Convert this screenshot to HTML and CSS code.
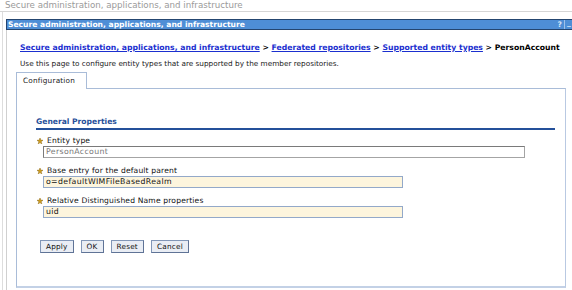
FILE: index.html
```html
<!DOCTYPE html>
<html>
<head>
<meta charset="utf-8">
<link rel="stylesheet" href="styles.css">
</head>
<body>
<div class="page-title">Secure administration, applications, and infrastructure</div>
<div class="outer">
  <div class="titlebar">
    <span class="tb-text">Secure administration, applications, and infrastructure</span>
    <span class="tb-icons"><span class="tb-help">?</span><span class="tb-min">_</span></span>
  </div>
  <div class="body">
    <div class="crumbs"><a href="#">Secure administration, applications, and infrastructure</a> &gt; <a href="#">Federated repositories</a> &gt; <a href="#">Supported entity types</a> &gt; <span class="current">PersonAccount</span></div>
    <div class="desc">Use this page to configure entity types that are supported by the member repositories.</div>
    <div class="tabs"><div class="tab">Configuration</div></div>
    <div class="panel">
      <div class="section">General Properties</div>
      <div class="field">
        <div class="label"><svg class="star" viewBox="0 0 6 6" width="6" height="6"><path d="M3 0 L3.7 2.1 L6 2.3 L4.1 3.6 L4.8 6 L3 4.6 L1.2 6 L1.9 3.6 L0 2.3 L2.3 2.1 Z" fill="#d4a21c" stroke="#8a6410" stroke-width="0.5"/></svg>Entity type</div>
        <div class="input ro wide">PersonAccount</div>
      </div>
      <div class="field">
        <div class="label"><svg class="star" viewBox="0 0 6 6" width="6" height="6"><path d="M3 0 L3.7 2.1 L6 2.3 L4.1 3.6 L4.8 6 L3 4.6 L1.2 6 L1.9 3.6 L0 2.3 L2.3 2.1 Z" fill="#d4a21c" stroke="#8a6410" stroke-width="0.5"/></svg>Base entry for the default parent</div>
        <div class="input edit">o=defaultWIMFileBasedRealm</div>
      </div>
      <div class="field">
        <div class="label"><svg class="star" viewBox="0 0 6 6" width="6" height="6"><path d="M3 0 L3.7 2.1 L6 2.3 L4.1 3.6 L4.8 6 L3 4.6 L1.2 6 L1.9 3.6 L0 2.3 L2.3 2.1 Z" fill="#d4a21c" stroke="#8a6410" stroke-width="0.5"/></svg>Relative Distinguished Name properties</div>
        <div class="input edit">uid</div>
      </div>
      <div class="buttons">
        <span class="btn">Apply</span><span class="btn">OK</span><span class="btn">Reset</span><span class="btn">Cancel</span>
      </div>
    </div>
  </div>
</div>
</body>
</html>
```
FILE: styles.css
```css
html, body {
  margin: 0;
  padding: 0;
  background: #ffffff;
  font-family: "DejaVu Sans", Verdana, sans-serif;
  color: #000;
  overflow: hidden;
}
.page-title {
  height: 11px;
  line-height: 10px;
  padding-left: 5px;
  font-size: 8.7px;
  color: #9a9a9a;
  border-bottom: 1px solid #d6d6d6;
  white-space: nowrap;
}
.outer {
  margin-left: 2px;
  border-left: 1px solid #dddddd;
  padding: 7px 0 0 3px;
  height: 280px;
}
.titlebar {
  display: flex;
  justify-content: space-between;
  align-items: center;
  height: 9px;
  border: 1px solid #24456f;
  border-right: none;
  background: #4e8ed6;
  color: #fff;
  font-weight: bold;
  font-size: 7.6px;
  line-height: 9px;
  white-space: nowrap;
}
.tb-text { padding-left: 1px; }
.tb-icons { display: flex; height: 9px; }
.tb-help { padding-right: 2px; color: #dbe8f7; }
.tb-min {
  border-left: 1px solid #9fc1ea;
  padding-left: 2px;
  width: 5px;
  line-height: 6px;
  color: #dbe8f7;
}
.body {
  border-left: 1px solid #d0d0d0;
  padding: 12px 6px 0 13px;
  height: 260px;
  font-size: 7.3px;
}
.crumbs {
  line-height: 11px;
  white-space: nowrap;
  font-weight: bold;
  font-size: 7.7px;
}
.crumbs a { color: #1b2fcf; text-decoration: underline; }
.current { color: #000; }
.desc {
  margin-top: 5px;
  line-height: 11px;
  white-space: nowrap;
  color: #222;
}
.tabs {
  margin: 3px 0 -1px -4px;
  display: flex;
}
.tab {
  position: relative;
  background: #fff;
  border: 1px solid #a9bcd8;
  border-bottom: none;
  height: 16px;
  line-height: 16px;
  padding: 0 6px;
  width: 57px;
  color: #222;
  letter-spacing: 0.2px;
}
.panel {
  margin-left: -4px;
  border: 1px solid #a9bcd8;
  border-right-color: #b9c9e2;
  border-bottom: 2px solid #c3d1e6;
  height: 197px;
  padding: 0 10px 0 19px;
}
.section {
  margin-top: 28px;
  line-height: 10px;
  font-weight: bold;
  font-size: 7.6px;
  color: #27509a;
  border-bottom: 2px solid #24509a;
  padding-bottom: 1px;
}
.field { margin-top: 5px; }
.field + .field { margin-top: 7px; }
.label {
  display: flex;
  align-items: center;
  line-height: 11px;
  color: #111;
  white-space: nowrap;
  font-size: 7.6px;
  letter-spacing: 0.15px;
}
.star { margin: 0 4px 0 1px; }
.input {
  margin-left: 7px;
  height: 10px;
  line-height: 10px;
  padding-left: 2px;
  white-space: nowrap;
  font-size: 7.8px;
  letter-spacing: 0.35px;
}
.ro {
  width: 478px;
  border: 1px solid #a4a4a4;
  border-top-color: #7a7a7a;
  border-left-color: #7a7a7a;
  color: #777;
  background: #fff;
}
.edit {
  width: 356px;
  border: 1px solid #93a9c9;
  background: #fdf5dd;
  color: #111;
}
.buttons {
  margin: 22px 0 0 4px;
  display: flex;
  gap: 7px;
}
.btn {
  height: 11px;
  line-height: 11px;
  padding: 0 5px;
  border: 1px solid #8196b7;
  border-right-color: #5f7396;
  border-bottom-color: #5f7396;
  background: #e9edf4;
  color: #111;
  letter-spacing: 0.2px;
}
```
